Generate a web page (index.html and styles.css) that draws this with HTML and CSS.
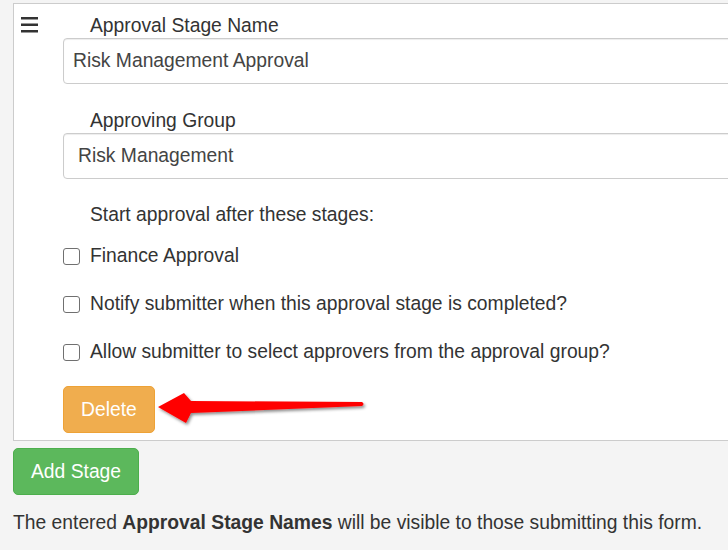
FILE: index.html
```html
<!DOCTYPE html>
<html>
<head lang="en">
  <meta charset="UTF-8">
  <title>Approval Stages</title>
  <link rel="stylesheet" href="styles.css">
</head>
<body>
<div class="page">
  <div class="stage">
    <div class="handle">
      <svg width="18" height="16" viewBox="0 0 18 16">
        <rect x="0" y="0" width="17" height="2.5" fill="#333"/>
        <rect x="0" y="6.5" width="17" height="2.5" fill="#333"/>
        <rect x="0" y="13" width="17" height="2.5" fill="#333"/>
      </svg>
    </div>
    <div class="fields">
      <label class="caption">Approval Stage Name</label>
      <input class="field" type="text" value="Risk Management Approval">

      <label class="caption caption-gap">Approving Group</label>
      <input class="field field-select" type="text" value="Risk Management">

      <div class="caption caption-after">Start approval after these stages:</div>

      <label class="check"><input type="checkbox"><span>Finance Approval</span></label>
      <label class="check"><input type="checkbox"><span>Notify submitter when this approval stage is completed?</span></label>
      <label class="check"><input type="checkbox"><span>Allow submitter to select approvers from the approval group?</span></label>

      <div class="actions">
        <button class="btn btn-warning">Delete</button>
        <!-- annotation arrow -->
        <svg class="arrow" width="220" height="50" viewBox="0 0 220 50">
          <defs>
            <filter id="shadow" x="-10%" y="-30%" width="130%" height="180%">
              <feDropShadow dx="1.5" dy="2" stdDeviation="1.5" flood-color="#000" flood-opacity="0.45"/>
            </filter>
          </defs>
          <path d="M4 29 L30 15 L37 23 L208 24 Q211 26 208 28 L37 35 L32 45 Z" fill="#ff0000" filter="url(#shadow)"/>
        </svg>
      </div>
    </div>
  </div>

  <button class="btn btn-success add">Add Stage</button>

  <p class="note">The entered <b>Approval Stage Names</b> will be visible to those submitting this form.</p>
</div>
</body>
</html>
```

FILE: styles.css
```css
* {
  margin: 0;
  padding: 0;
  box-sizing: border-box;
}

body {
  background-color: #f4f4f4;
  font-family: "Liberation Sans", Arial, sans-serif;
  font-size: 19.3px;
  line-height: 24px;
  color: #333;
  overflow: hidden;
}

.page {
  padding: 3px 0 0 13px;
  width: 800px;
}

.stage {
  display: flex;
  width: 780px;
  background-color: #fff;
  border: 1px solid #ccc;
  padding: 10px 0 7px 0;
}

.handle {
  width: 49px;
  padding: 3px 0 0 7px;
}

.handle svg {
  display: block;
}

.fields {
  flex: 1;
  display: flex;
  flex-direction: column;
}

.caption {
  display: block;
  margin-left: 27px;
}

.caption-gap {
  margin-top: 25px;
}

.caption-after {
  margin-top: 24px;
  margin-bottom: 17px;
}

.field {
  display: block;
  width: 100%;
  height: 46px;
  padding: 0 9px;
  border: 1px solid #ccc;
  border-radius: 4px;
  font-family: inherit;
  font-size: 19.3px;
  color: #444;
  background-color: #fff;
  box-shadow: inset 0 1px 1px rgba(0, 0, 0, .075);
  outline: none;
}

.field-select {
  padding-left: 14px;
}

.check {
  display: flex;
  align-items: center;
  gap: 10px;
  margin-bottom: 24px;
  cursor: pointer;
}

.check input {
  appearance: none;
  -webkit-appearance: none;
  width: 17px;
  height: 17px;
  border: 1.5px solid #707070;
  border-radius: 3px;
  background-color: #fff;
  flex-shrink: 0;
}

.actions {
  position: relative;
  margin-top: -2px;
}

.btn {
  display: inline-block;
  height: 47px;
  padding: 0 17px;
  border: 1px solid transparent;
  border-radius: 5px;
  font-family: inherit;
  font-size: 19.3px;
  color: #fff;
  cursor: pointer;
}

.btn-warning {
  background-color: #f0ad4e;
  border-color: #eea236;
}

.btn-success {
  background-color: #5cb85c;
  border-color: #4cae4c;
}

.arrow {
  position: absolute;
  left: 91px;
  top: -8px;
}

.add {
  display: block;
  margin-top: 7px;
}

.note {
  margin-top: 16px;
}
```
